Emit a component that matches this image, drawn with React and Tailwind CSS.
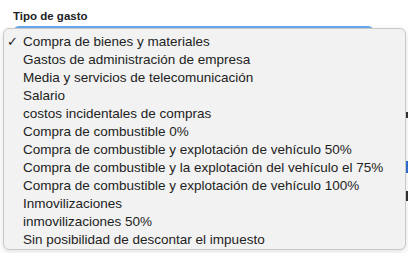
import React from "react";

const options = [
  "Compra de bienes y materiales",
  "Gastos de administración de empresa",
  "Media y servicios de telecomunicación",
  "Salario",
  "costos incidentales de compras",
  "Compra de combustible 0%",
  "Compra de combustible y explotación de vehículo 50%",
  "Compra de combustible y la explotación del vehículo el 75%",
  "Compra de combustible y explotación de vehículo 100%",
  "Inmovilizaciones",
  "inmovilizaciones 50%",
  "Sin posibilidad de descontar el impuesto",
];

export default function App() {
  return (
    <div
      className="relative w-[408px] h-[253px] overflow-hidden bg-white"
      style={{ fontFamily: "'Liberation Sans', Arial, sans-serif" }}
    >
      {/* form behind the menu */}
      <div className="pt-[9px] pl-[13px]">
        <div className="text-[11.5px] font-bold text-[#222] leading-[14px]">Tipo de gasto</div>
        <div className="mt-[3px] w-[361px] h-[30px] rounded-[6px] border-2 border-[#6aa9f0] bg-white"></div>
        <div className="mt-[56px] ml-[392px] w-[4px] h-[6px] bg-[#333]"></div>
        <div className="mt-[43px] ml-[392px] w-[4px] h-[12px] bg-[#2f6fd6]"></div>
        <div className="mt-[18px] ml-[392px] w-[4px] h-[10px] bg-[#333]"></div>
      </div>

      {/* open native select menu */}
      <div className="absolute left-[3px] top-[28px] w-[403px] h-[222px] rounded-[6px] border border-[#c9c9c9] bg-[#f2f2f2] pt-[4px] shadow-[0_2px_6px_rgba(0,0,0,0.12)]">
        {options.map((o, i) => (
          <div key={o} className="flex items-center h-[18px] text-[13.5px] text-[#222]">
            <span className="w-[19px] pl-[3px] text-[13px]">{i === 0 ? "✓" : ""}</span>
            <span>{o}</span>
          </div>
        ))}
      </div>
    </div>
  );
}
